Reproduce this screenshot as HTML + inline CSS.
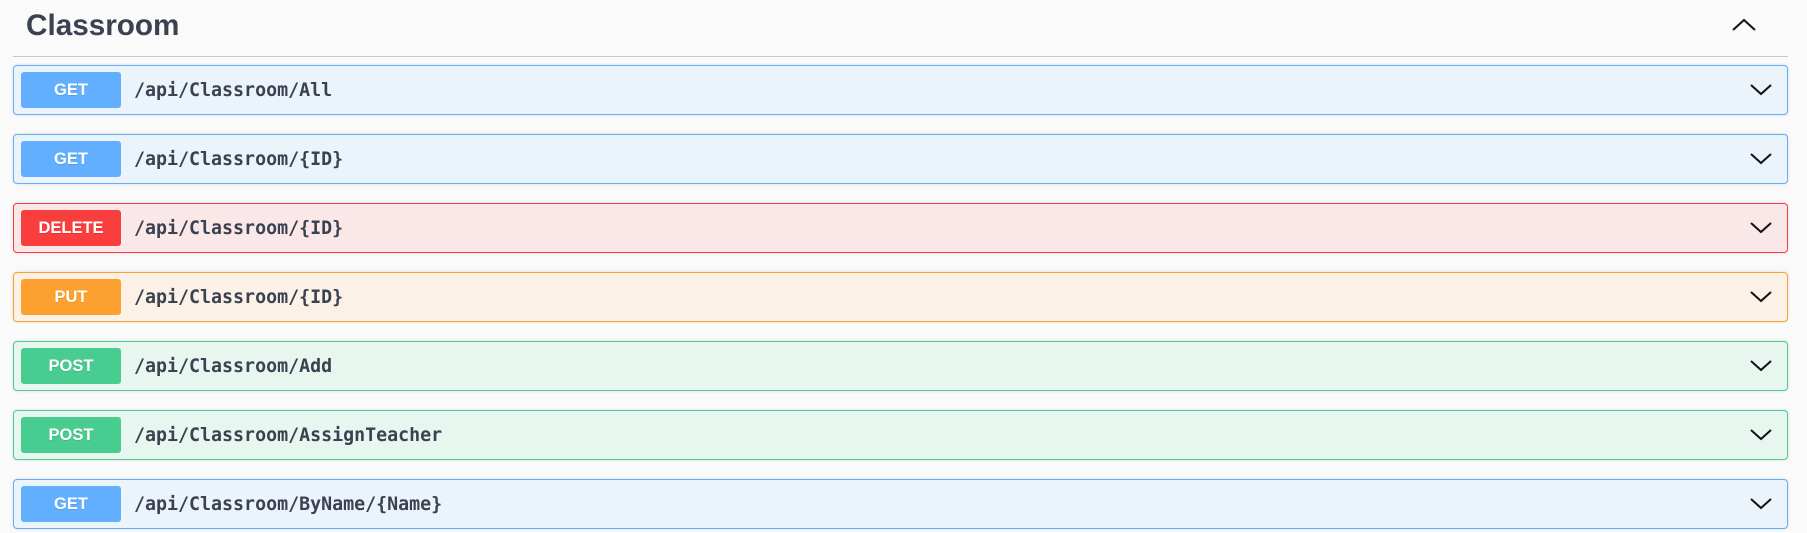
<!DOCTYPE html>
<html><head><meta charset="utf-8"><style>
*{margin:0;padding:0;box-sizing:border-box}
body{width:1807px;height:533px;background:#fafafa;position:relative;overflow:hidden;font-family:"Liberation Sans",sans-serif}
.title{position:absolute;left:26px;top:5px;font-size:29.7px;font-weight:bold;color:#3b4151;line-height:42px}
.hr{position:absolute;left:13px;width:1775px;top:56px;height:1px;background:#c8c8c8}
.up{position:absolute;left:1731px;top:16px}
.row{position:absolute;left:13px;width:1775px;height:50px;border:1px solid;border-radius:4px;box-shadow:0 0 3px rgba(0,0,0,.12)}
.b{position:absolute;left:7px;top:6px;width:100px;height:36px;border-radius:3px;color:#fff;font-weight:bold;font-size:16.5px;text-align:center;line-height:36px;text-shadow:0 1px 0 rgba(0,0,0,.1)}
.p{position:absolute;left:120px;top:1px;line-height:48px;font-family:"DejaVu Sans Mono",monospace;font-weight:bold;font-size:18.3px;color:#3b4151}
.ch{position:absolute;right:14px;top:15px}
.get{border-color:#61affe;background:#ebf3fb}.get .b{background:#61affe}
.del{border-color:#f93e3e;background:#fae8e8}.del .b{background:#f93e3e}
.put{border-color:#fca130;background:#fbf1e6}.put .b{background:#fca130}
.post{border-color:#49cc90;background:#e8f6f0}.post .b{background:#49cc90}
</style></head><body>
<div class="title">Classroom</div>
<svg class="up" width="26" height="18" viewBox="0 0 26 18"><path d="M2 14 L13 4 L24 14" fill="none" stroke="#111" stroke-width="2"/></svg>
<div class="hr"></div>

<div class="row get" style="top:65px"><div class="b">GET</div><div class="p">/api/Classroom/All</div><svg class="ch" width="24" height="18" viewBox="0 0 24 18"><path d="M2 4 L12 13 L22 4" fill="none" stroke="#111" stroke-width="2"/></svg></div>
<div class="row get" style="top:134px"><div class="b">GET</div><div class="p">/api/Classroom/{ID}</div><svg class="ch" width="24" height="18" viewBox="0 0 24 18"><path d="M2 4 L12 13 L22 4" fill="none" stroke="#111" stroke-width="2"/></svg></div>
<div class="row del" style="top:203px"><div class="b">DELETE</div><div class="p">/api/Classroom/{ID}</div><svg class="ch" width="24" height="18" viewBox="0 0 24 18"><path d="M2 4 L12 13 L22 4" fill="none" stroke="#111" stroke-width="2"/></svg></div>
<div class="row put" style="top:272px"><div class="b">PUT</div><div class="p">/api/Classroom/{ID}</div><svg class="ch" width="24" height="18" viewBox="0 0 24 18"><path d="M2 4 L12 13 L22 4" fill="none" stroke="#111" stroke-width="2"/></svg></div>
<div class="row post" style="top:341px"><div class="b">POST</div><div class="p">/api/Classroom/Add</div><svg class="ch" width="24" height="18" viewBox="0 0 24 18"><path d="M2 4 L12 13 L22 4" fill="none" stroke="#111" stroke-width="2"/></svg></div>
<div class="row post" style="top:410px"><div class="b">POST</div><div class="p">/api/Classroom/AssignTeacher</div><svg class="ch" width="24" height="18" viewBox="0 0 24 18"><path d="M2 4 L12 13 L22 4" fill="none" stroke="#111" stroke-width="2"/></svg></div>
<div class="row get" style="top:479px"><div class="b">GET</div><div class="p">/api/Classroom/ByName/{Name}</div><svg class="ch" width="24" height="18" viewBox="0 0 24 18"><path d="M2 4 L12 13 L22 4" fill="none" stroke="#111" stroke-width="2"/></svg></div>
</body></html>
